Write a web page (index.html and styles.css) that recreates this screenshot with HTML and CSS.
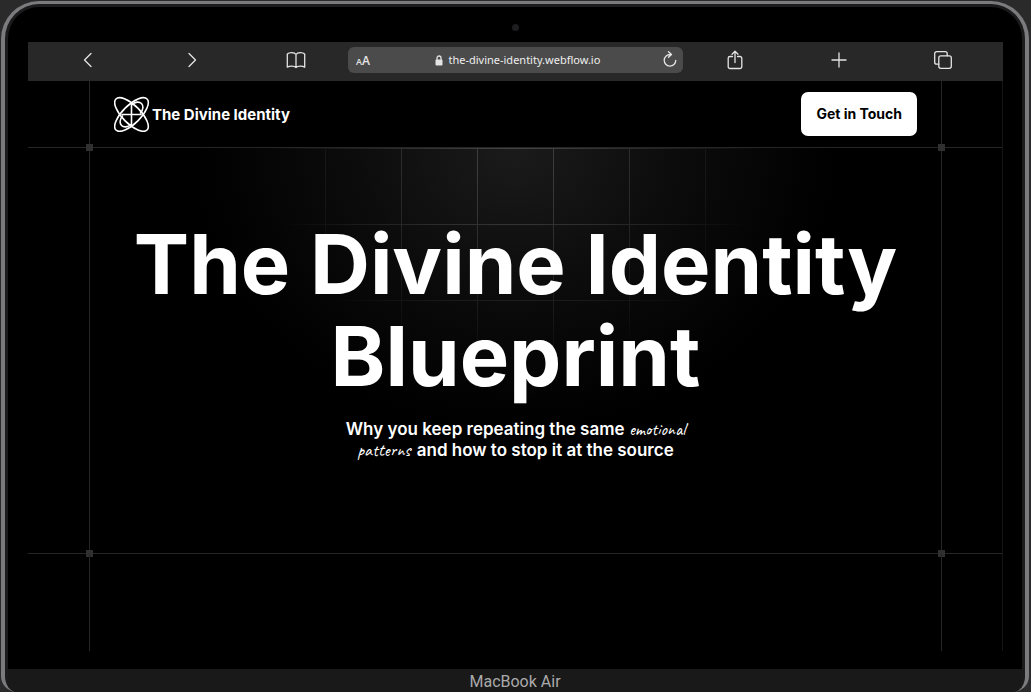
FILE: index.html
```
<!DOCTYPE html>
<html lang="en">
<head>
    <meta charset="UTF-8">
    <meta name="viewport" content="width=device-width, initial-scale=1.0">
    <title>The Divine Identity</title>
    <link rel="stylesheet" href="styles.css">
</head>
<body>
    <div class="laptop">
        <div class="camera"></div>

        <div class="screen">
            <div class="toolbar">
                <button class="tool-btn" type="button" aria-label="Back">
                    <svg width="20" height="20" viewBox="0 0 20 20"><path d="M13 3.5 6.5 10l6.500 6.500"/></svg>
                </button>
                <button class="tool-btn" type="button" aria-label="Forward">
                    <svg width="20" height="20" viewBox="0 0 20 20"><path d="M7 3.500 13.500 10 7 16.500"/></svg>
                </button>
                <button class="tool-btn" type="button" aria-label="Bookmarks">
                    <svg width="20" height="20" viewBox="0 0 20 20"><path d="M10 4.500C8.500 2 3.500 2 1.300 4v13.200c2.200-1.600 7-1.600 8.700.3 1.700-1.900 6.500-1.900 8.700-.3V4C16.500 2 11.500 2 10 4.500zM10 4.500v13"/></svg>
                </button>
                <form class="address-bar">
                    <button class="text-size" type="button" aria-label="Text size"><small>A</small>A</button>
                    <label class="url-field">
                        <svg width="8" height="11" viewBox="0 0 8 11"><rect x="0.500" y="4.500" width="7" height="6" rx="1" fill="#e4e4e4" stroke="none"/><path d="M2 5V3a2 2 0 0 1 4 0v2"/></svg>
                        <input class="url" type="text" value="the-divine-identity.webflow.io" aria-label="Address">
                    </label>
                    <button class="reload" type="button" aria-label="Reload">
                        <svg width="16" height="18" viewBox="0 0 16 18"><path d="M8.500 3.500A5.800 5.800 0 1 0 13.800 9.300M6.500.8l3 2.700-3 2.800"/></svg>
                    </button>
                </form>
                <button class="tool-btn" type="button" aria-label="Share">
                    <svg width="20" height="20" viewBox="0 0 20 20"><path d="M7.500 6.500H5a1.800 1.800 0 0 0-1.800 1.800v8.400A1.800 1.800 0 0 0 5 18.500h10a1.800 1.800 0 0 0 1.800-1.800V8.300A1.800 1.800 0 0 0 15 6.500h-2.500M10 12.500V1.500M7 4.300l3-3 3 3"/></svg>
                </button>
                <button class="tool-btn" type="button" aria-label="New tab">
                    <svg width="20" height="20" viewBox="0 0 20 20"><path d="M10 3v14M3 10h14"/></svg>
                </button>
                <button class="tool-btn" type="button" aria-label="Tabs">
                    <svg width="20" height="20" viewBox="0 0 20 20"><rect x="5.800" y="5.800" width="12.500" height="12.500" rx="2"/><path d="M5.800 14.200H3.700a2 2 0 0 1-2-2V3.700a2 2 0 0 1 2-2h8.500a2 2 0 0 1 2 2v2.100"/></svg>
                </button>
            </div>

            <div class="site">
                <header class="site-row">
                    <div class="column navbar">
                        <a class="logo" href="#">
                            <svg width="36" height="36" viewBox="0 0 36 36">
                                <ellipse cx="17.500" cy="18.500" rx="22" ry="9" transform="rotate(45 17.500 18.500)"/>
                                <ellipse cx="17.500" cy="18.500" rx="22" ry="9" transform="rotate(-45 17.500 18.500)"/>
                                <path d="M17.500 7.500v22M8 18.500h19"/>
                                <path d="M18 8.500c3-3 7.500-3 9.500-1s2 6-1 9.500M17 28.500c-3 3-7.500 3-9.500 1s-2-6 1-9.500"/>
                            </svg>
                            The Divine Identity
                        </a>
                        <a class="contact-btn" href="#contact">Get in Touch</a>
                        <span class="node node-left"></span>
                        <span class="node node-right"></span>
                    </div>
                </header>

                <main class="site-row hero">
                    <div class="column hero-content">
                        <h1>The Divine Identity Blueprint</h1>
                        <p>Why you keep repeating the same <em>emotional patterns</em> and how to stop it at the source</p>
                        <span class="node node-left"></span>
                        <span class="node node-right"></span>
                    </div>
                </main>

                <div class="column next-section"></div>
            </div>
        </div>

        <footer class="chin">MacBook Air</footer>
    </div>
</body>
</html>
```
FILE: styles.css
```
:root {
    --line-color: #262626;
    --icon-color: #e4e4e4;
}
* {
    box-sizing: border-box;
}
body {
    margin: 0;
    padding: 1px 2px 0 1px;
    height: 100vh;
    overflow: hidden;
    background-color: #2a2a2b;
    font-family: Inter, "Liberation Sans", sans-serif;
    color: #fff;
}
.laptop {
    display: flex;
    flex-direction: column;
    height: 100%;
    border: 4px solid #7b7a7d;
    border-top-width: 3px;
    border-bottom: none;
    border-radius: 38px 38px 16px 16px;
    background-color: #000;
    box-shadow: inset 0 0 0 3px #1b1b1c;
    overflow: hidden;
}
.camera {
    width: 7px;
    height: 7px;
    margin: 20px auto 11px;
    border-radius: 50%;
    background-color: #1d1d1f;
}
.screen {
    flex: 1;
    display: flex;
    flex-direction: column;
    margin: 0 22px 18px 23px;
}
svg {
    display: block;
    fill: none;
    stroke: var(--icon-color);
    stroke-width: 1.3;
    stroke-linecap: round;
    stroke-linejoin: round;
}

/* Browser toolbar */
.toolbar {
    display: grid;
    grid-template-columns: repeat(3, 1fr) 335px repeat(3, 1fr);
    align-items: center;
    justify-items: center;
    height: 39px;
    padding: 0 8px 3px;
    background-color: #282828;
}
.toolbar button {
    padding: 0;
    border: none;
    background: none;
    color: var(--icon-color);
    cursor: pointer;
}
.address-bar {
    display: flex;
    align-items: center;
    justify-content: space-between;
    width: 100%;
    height: 26px;
    padding: 0 5px 0 8px;
    border-radius: 6px;
    background-color: #4b4b4b;
}
.toolbar .text-size {
    font-family: "Open Sans", sans-serif;
    font-size: 12px;
    font-weight: 600;
}
.text-size small {
    font-size: 9px;
}
.url-field {
    display: flex;
    align-items: center;
    gap: 5px;
    padding-left: 8px;
}
.url {
    width: 156px;
    padding: 0;
    border: none;
    background: none;
    color: #eee;
    font-family: "Noto Sans", sans-serif;
    font-size: 11px;
    line-height: 16px;
    outline: none;
}

/* Website */
.site {
    flex: 1;
    display: flex;
    flex-direction: column;
    border-right: 1px solid #151515;
}
.site-row {
    border-bottom: 1px solid var(--line-color);
}
.column {
    position: relative;
    margin: 0 60px 0 61px;
    border-left: 1px solid var(--line-color);
    border-right: 1px solid var(--line-color);
}
.navbar {
    display: flex;
    align-items: center;
    justify-content: space-between;
    height: 66px;
    padding: 0 24px;
    z-index: 1;
}
.logo {
    display: flex;
    align-items: center;
    gap: 2px;
    color: #fff;
    font-size: 15px;
    font-weight: 700;
    text-decoration: none;
}
.logo svg {
    stroke: #fff;
    stroke-width: 1.6;
}
.contact-btn {
    padding: 12px 15px;
    border-radius: 7px;
    background-color: #fff;
    color: #000;
    font-size: 14px;
    font-weight: 700;
    line-height: 20px;
    text-decoration: none;
}
.node {
    position: absolute;
    bottom: -4px;
    width: 7px;
    height: 7px;
    background-color: #303030;
}
.node-left {
    left: -4px;
}
.node-right {
    right: -4px;
}
.hero {
    position: relative;
    background: radial-gradient(ellipse 320px 280px at 50% 0, #1b1b1b, #0c0c0c 50%, #000);
}
/* faded square grid behind the heading */
.hero::before {
    content: "";
    position: absolute;
    inset: 0;
    background-image:
        linear-gradient(90deg, #444 1px, transparent 1px),
        linear-gradient(#444 1px, transparent 1px);
    background-size: 76px 76px;
    background-position: 50% 0;
    -webkit-mask-image: radial-gradient(ellipse 250px 230px at 50% 0, #000, transparent);
    mask-image: radial-gradient(ellipse 250px 230px at 50% 0, #000, transparent);
}
.hero-content {
    height: 405px;
    padding: 70px 24px 0;
    text-align: center;
}
h1 {
    margin: 0;
    font-size: 83px;
    font-weight: 700;
    line-height: 92px;
}
p {
    max-width: 360px;
    margin: 17px auto 0;
    font-size: 17px;
    font-weight: 600;
    line-height: 21px;
}
em {
    margin-right: 2px;
    font-family: Caveat, Lato, cursive;
    font-size: 18px;
    font-style: normal;
    font-weight: 400;
}
.next-section {
    flex: 1;
}
.chin {
    height: 23px;
    margin: 0 3px;
    background-color: #191919;
    color: #aaa;
    font-family: Roboto, sans-serif;
    font-size: 16px;
    line-height: 26px;
    text-align: center;
}
```
